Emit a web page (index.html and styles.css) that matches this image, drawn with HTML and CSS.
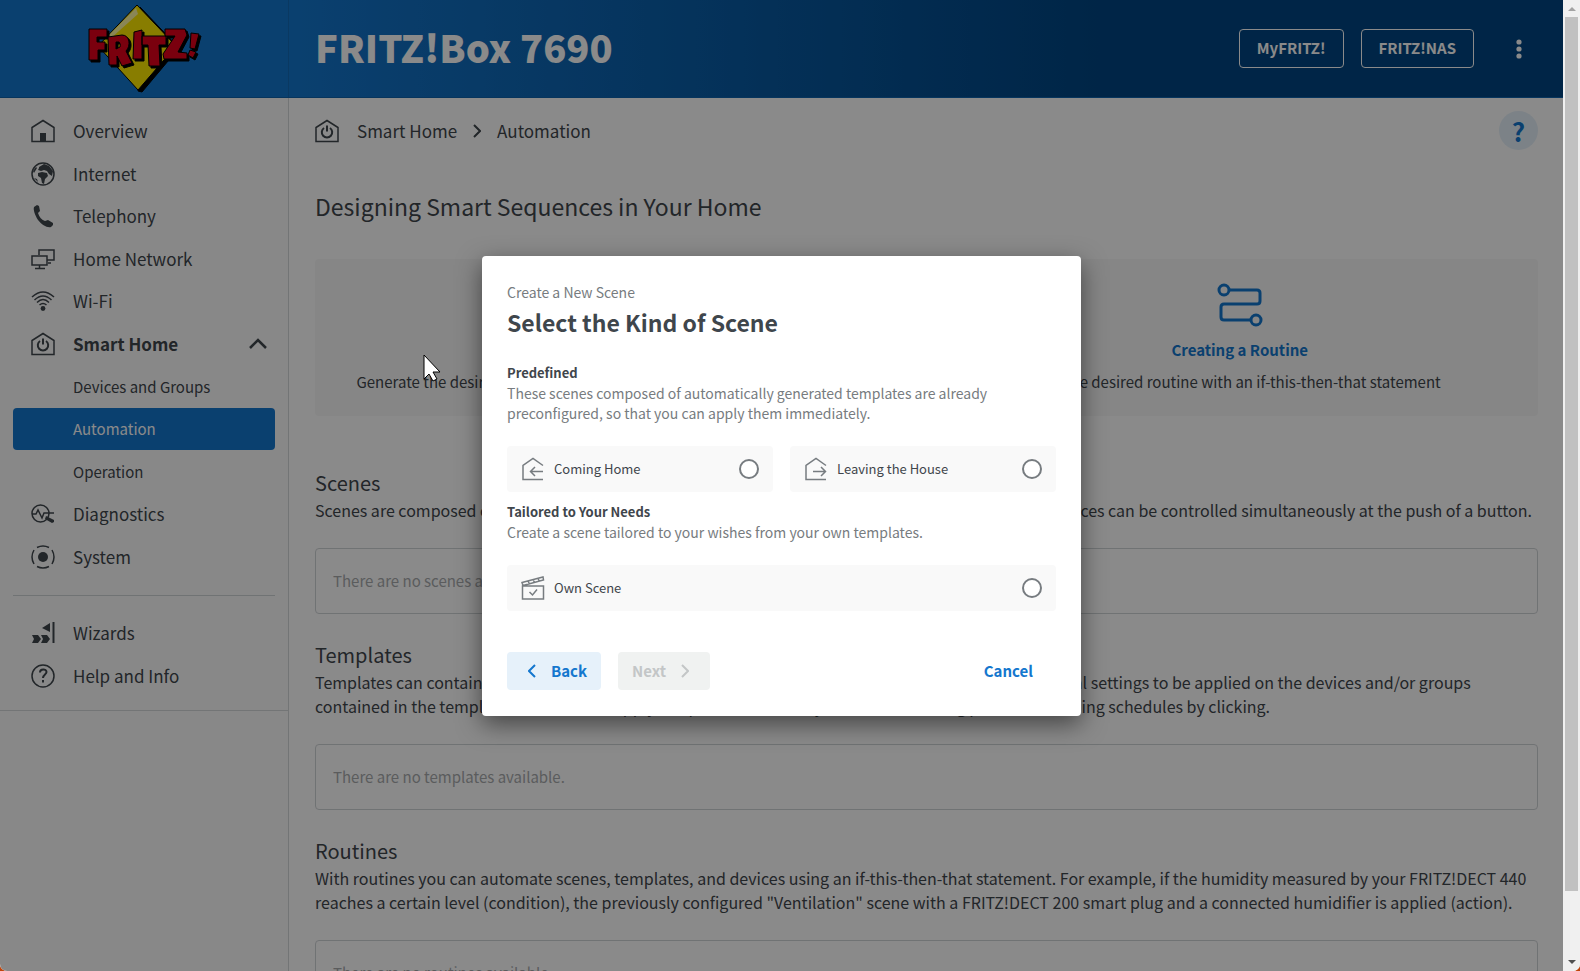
FILE: index.html
```html
<!DOCTYPE html>
<html lang="en">
<head>
    <meta charset="utf-8">
    <title>FRITZ!Box 7690</title>
    <link rel="stylesheet" href="styles.css">
</head>
<body>
    <svg width="0" height="0" class="defs" aria-hidden="true">
        <symbol id="icon-smarthome" viewBox="0 0 24 24">
            <path d="M1 22.500V8.500L12 1.500l11 7v14z"/>
            <path d="M12 6.500v6M9 9a5.200 5.200 0 1 0 6 0" stroke-width="2"/>
        </symbol>
        <symbol id="logo-letters" viewBox="0 0 114 90">
            <path fill-rule="evenodd" d="M1 25h18v8H9v5h8v8h-7v10H1zM20 33l14-2c8 0 9 11 4 16l6 12-10 3-5-10v9h-8zM28 38v7l4-2q1-3-1-5zM46 28l8-2v29h-9zM54 32h24v9h-7l1 21H61l-1-21h-6zM77 25h20l2 6-9 17 9 1v6H76l-1-5 12-18H77zM103 29l8 1-4 15-5-1zM102 46l6 2-3 6-5-3z"/>
        </symbol>
    </svg>

    <div class="window">
        <div class="page">
            <header class="header">
                <div class="logo">
                    <svg width="114" height="90" viewBox="0 0 114 90" role="img" aria-label="FRITZ!">
                        <path class="logo-shadow" d="M52 3l39 41-37 44-4-1z"/>
                        <path class="logo-diamond" d="M49 1l39 41-38 44L10 42z"/>
                        <path class="logo-shine" d="M48 4L20 32l2 3 28-25z"/>
                        <use class="logo-text-shadow" href="#logo-letters" x="2" y="2"/>
                        <use class="logo-text" href="#logo-letters"/>
                    </svg>
                </div>
                <div class="header-bar">
                    <div class="product">FRITZ!Box 7690</div>
                    <a class="header-button" href="#">MyFRITZ!</a>
                    <a class="header-button" href="#">FRITZ!NAS</a>
                    <button type="button" class="more" aria-label="More">
                        <svg width="6" height="20" viewBox="0 0 6 20"><circle cx="3" cy="3" r="2.600"/><circle cx="3" cy="10" r="2.600"/><circle cx="3" cy="17" r="2.600"/></svg>
                    </button>
                </div>
            </header>

            <div class="columns">
                <nav class="sidebar">
                    <ul class="menu">
                        <li><a href="#">
                            <svg class="icon" viewBox="0 0 24 24"><path d="M1 22.500V8.500L12 1.500l11 7v14z"/><path class="solid" d="M9 14h6v8.500H9z"/></svg>
                            Overview</a></li>
                        <li><a href="#">
                            <svg class="icon" viewBox="0 0 24 24"><circle cx="12" cy="12" r="11"/><path class="solid" d="M8 5l5-3 5 2 4 5-1 5-3-2-2-3-3-1-3 1-3-1 1-2zM7 11l4-1 5 1 1 3-3 3-1 5-2-1-1-5-3-2zM2 9l3-4 1 1-3 5zM3 16l3 1 1 3z"/></svg>
                            Internet</a></li>
                        <li><a href="#">
                            <svg class="icon" viewBox="0 0 24 24"><path class="solid" d="M3 3l3-2 2 1 1 5-2 2c1 4 4 7 7 8l3-1 5 3v2l-2 2c-4 1-9-2-13-7C4 11 2 6 3 3z"/></svg>
                            Telephony</a></li>
                        <li><a href="#">
                            <svg class="icon" viewBox="0 0 24 24"><path d="M8 8V3h15v10h-7M1 9h15v9H1zM8.500 18v3M4 21.500h10M17 16h3"/></svg>
                            Home Network</a></li>
                        <li><a href="#">
                            <svg class="icon" viewBox="0 0 24 24"><path d="M1 8q11-10 22 0M3.500 11q8.500-8 17 0M6 13.500q6-6 12 0M8.500 16q3.500-3 7 0"/><circle class="solid" cx="12" cy="19.500" r="2.400"/></svg>
                            Wi-Fi</a></li>
                        <li><a class="open" href="#">
                            <svg class="icon"><use href="#icon-smarthome"/></svg>
                            Smart Home
                            <svg class="arrow" width="18" height="12" viewBox="0 0 18 12"><path d="M1 10l8-8 8 8"/></svg></a></li>
                        <li><a class="sub" href="#">Devices and Groups</a></li>
                        <li><a class="sub active" href="#">Automation</a></li>
                        <li><a class="sub" href="#">Operation</a></li>
                        <li><a href="#">
                            <svg class="icon" viewBox="0 0 24 24"><circle cx="9.500" cy="11.500" r="8.500"/><path d="M1 12h4l2-4 4 8 2-5h10"/><path class="solid" d="M15 14l8 4v2l-2 1-7-4z"/></svg>
                            Diagnostics</a></li>
                        <li><a href="#">
                            <svg class="icon" viewBox="0 0 24 24"><circle class="solid" cx="12" cy="12" r="5"/><path d="M6 2.500q6-3 12 0M6 21.500q6 3 12 0M3 5q-4 7 0 14M21 5q4 7 0 14"/></svg>
                            System</a></li>
                    </ul>
                    <ul class="menu menu-extra">
                        <li><a href="#">
                            <svg class="icon" viewBox="0 0 24 24"><path class="solid" d="M1 14h6l3 4-3 4H1l2-4zM10 14h6l3 4-3 4h-6l2-4zM11 7l8-5v9z"/><path d="M22.500 1v21" stroke-width="2"/></svg>
                            Wizards</a></li>
                        <li><a href="#">
                            <svg class="icon" viewBox="0 0 24 24"><circle cx="12" cy="12" r="11"/><path d="M9 8.500c0-4 6.500-4 6.500-.500 0 2.500-3.500 2.500-3.500 6M12 16v2.500" stroke-width="2"/></svg>
                            Help and Info</a></li>
                    </ul>
                </nav>

                <main class="content">
                    <div class="breadcrumb">
                        <svg class="icon"><use href="#icon-smarthome"/></svg>
                        <a href="#">Smart Home</a>
                        <svg class="crumb-arrow" width="8" height="14" viewBox="0 0 8 14"><path d="M1 1l6 6-6 6"/></svg>
                        <a href="#">Automation</a>
                        <button type="button" class="help" aria-label="Help">?</button>
                    </div>

                    <h1>Designing Smart Sequences in Your Home</h1>

                    <div class="tiles">
                        <div class="tile">
                            <svg class="tile-icon" viewBox="0 0 46 46"><path d="M3 18h40v25H3zM3 15L42 4"/></svg>
                            <a href="#">Creating a Scene</a>
                            <p>Generate the desired scene for your home using your individual templates</p>
                        </div>
                        <div class="tile">
                            <svg class="tile-icon" viewBox="0 0 46 46"><circle cx="7" cy="8" r="5"/><path d="M12 8h28q3 0 3 3v8q0 3-3 3H7q-3 0-3 3v10q0 3 3 3h27"/><circle cx="39" cy="38" r="5"/></svg>
                            <a href="#">Creating a Routine</a>
                            <p>Set the desired routine with an if-this-then-that statement</p>
                        </div>
                    </div>

                    <section>
                        <h2>Scenes</h2>
                        <p>Scenes are composed of one or more individual templates. With such scenes, multiple smart home devices can be controlled simultaneously at the push of a button.</p>
                        <div class="empty">There are no scenes available.</div>
                    </section>
                    <section>
                        <h2>Templates</h2>
                        <p>Templates can contain the settings of various devices and groups. They allow several different individual settings to be applied on the devices and/or groups<br>contained in the template. You can then apply templates like holiday schedules, heating plans or switching schedules by clicking.</p>
                        <div class="empty">There are no templates available.</div>
                    </section>
                    <section>
                        <h2>Routines</h2>
                        <p>With routines you can automate scenes, templates, and devices using an if-this-then-that statement. For example, if the humidity measured by your FRITZ!DECT 440 reaches a certain level (condition), the previously configured "Ventilation" scene with a FRITZ!DECT 200 smart plug and a connected humidifier is applied (action).</p>
                        <div class="empty">There are no routines available.</div>
                    </section>
                </main>
            </div>

            <div class="overlay">
                <form class="dialog" role="dialog" aria-labelledby="dialog-title">
                    <p class="dialog-step">Create a New Scene</p>
                    <h2 id="dialog-title">Select the Kind of Scene</h2>

                    <h3>Predefined</h3>
                    <p>These scenes composed of automatically generated templates are already preconfigured, so that you can apply them immediately.</p>
                    <div class="options">
                        <label class="option" for="coming">
                            <svg class="icon" viewBox="0 0 24 24"><path d="M22 8.500L12 1.500l-10 7v14h20M22 14.500H10M14 10l-4.500 4.500L14 19"/></svg>
                            <span>Coming Home</span>
                            <input type="radio" id="coming" name="scene">
                        </label>
                        <label class="option" for="leaving">
                            <svg class="icon" viewBox="0 0 24 24"><path d="M22 8.500L12 1.500l-10 7v14h20M9 14.500h12M17 10l4.500 4.500L17 19"/></svg>
                            <span>Leaving the House</span>
                            <input type="radio" id="leaving" name="scene">
                        </label>
                    </div>

                    <h3>Tailored to Your Needs</h3>
                    <p>Create a scene tailored to your wishes from your own templates.</p>
                    <div class="options">
                        <label class="option wide" for="own">
                            <svg class="icon" viewBox="0 0 24 24"><path d="M1.500 10h21v13h-21zM1 6.500L22 1l.500 3L2 9.500zM7 5l1.500 3M12 3.500l1.500 3M17 2.500l1.500 3M8.500 16l3 3 4.500-5.500"/></svg>
                            <span>Own Scene</span>
                            <input type="radio" id="own" name="scene">
                        </label>
                    </div>

                    <div class="buttons">
                        <button type="button" class="back"><svg width="8" height="14" viewBox="0 0 8 14"><path d="M7 1L1 7l6 6"/></svg>Back</button>
                        <button type="submit" class="next" disabled>Next<svg width="8" height="14" viewBox="0 0 8 14"><path d="M1 1l6 6-6 6"/></svg></button>
                        <button type="button" class="cancel">Cancel</button>
                    </div>
                </form>
            </div>

            <svg class="pointer" width="20" height="28" viewBox="0 0 20 28" aria-hidden="true"><path d="M1 1v24l5-5 4 7 4-2-4-7h7z"/></svg>
        </div>

        <div class="scrollbar" aria-hidden="true">
            <svg width="17" height="17" viewBox="0 0 17 17"><path class="dim" d="M5 11l4-4 4 4z"/></svg>
            <div class="thumb"></div>
            <svg width="17" height="17" viewBox="0 0 17 17"><path d="M5 6l4 4 4-4z"/></svg>
        </div>
    </div>
</body>
</html>
```

FILE: styles.css
```css
* {
    box-sizing: border-box;
}

body {
    margin: 0;
    font-family: "Noto Sans CJK SC", "Noto Sans", sans-serif;
    font-size: 15px;
    line-height: 24px;
    color: #3f464c;
    background-color: #c0440c;
}

a {
    color: inherit;
    text-decoration: none;
}

button {
    font-family: inherit;
    cursor: pointer;
}

h1, h2, h3, p, ul {
    margin: 0;
    padding: 0;
    font-weight: normal;
}

svg {
    flex: none;
    fill: none;
    stroke: currentColor;
}

.defs {
    position: absolute;
}

.defs symbol,
.defs path {
    fill: inherit;
}

.window {
    display: flex;
    height: 100vh;
    overflow: hidden;
    background-color: #ffffff;
    border-radius: 0 0 7px 7px;
}

.page {
    position: relative;
    flex: 1;
    overflow: hidden;
}

/* Header */
.header {
    display: flex;
    height: 98px;
    color: #ffffff;
    background: linear-gradient(90deg, #1477ce 288px, #004583 1100px);
    border-bottom: 1px solid #0d62ad;
}

.logo {
    width: 289px;
    padding: 4px 0 0 88px;
    border-right: 1px solid #1369b5;
}

.logo svg {
    stroke: #000000;
}

.logo-shadow,
.logo-text-shadow {
    fill: #000000;
}

.logo-diamond {
    fill: #fbe800;
}

.logo-shine {
    fill: #fff7a0;
    stroke: none;
}

.logo-text {
    fill: #e2001a;
}

.header-bar {
    display: flex;
    flex: 1;
    align-items: center;
    padding: 0 33px 0 26px;
}

.product {
    flex: 1;
    padding-bottom: 3px;
    font-size: 38px;
    font-weight: 900;
    line-height: 48px;
}

.header-button {
    height: 39px;
    margin-right: 17px;
    padding: 0 17px;
    font-weight: bold;
    line-height: 36px;
    border: 1px solid #ffffff;
    border-radius: 4px;
}

.more {
    display: flex;
    justify-content: center;
    width: 22px;
    margin-left: 17px;
    padding: 0;
    color: #ffffff;
    background: none;
    border: none;
}

.more svg {
    fill: #ffffff;
    stroke: none;
}

.columns {
    display: flex;
    height: 100%;
}

/* Sidebar */
.sidebar {
    width: 289px;
    background-color: #fcfcfc;
    border-right: 1px solid #d5d8da;
}

.menu {
    display: grid;
    grid-auto-rows: 1fr;
    height: 468px;
    margin: 12px 13px 0;
    list-style: none;
    font-size: 17px;
}

.menu a {
    display: flex;
    align-items: center;
    gap: 18px;
    height: 100%;
    padding: 0 8px 0 18px;
}

.menu .sub {
    padding-left: 60px;
    font-size: 15px;
}

.menu .open {
    font-weight: bold;
}

.menu .active {
    color: #ffffff;
    background-color: #1477ce;
    border-radius: 4px;
}

.menu-extra {
    height: 115px;
    margin-top: 17px;
    padding: 16px 0 13px;
    border-top: 1px solid #d0d4d6;
}

.sidebar::after {
    content: "";
    display: block;
    border-top: 1px solid #d5d8da;
}

.icon {
    width: 24px;
    height: 24px;
    stroke-width: 1.5;
}

.icon .solid {
    fill: currentColor;
    stroke: none;
}

.arrow {
    margin-left: auto;
    stroke-width: 2.5;
}

/* Content */
.content {
    flex: 1;
    min-width: 0;
    padding: 13px 25px 0 26px;
}

.breadcrumb {
    display: flex;
    align-items: center;
    height: 39px;
    font-size: 17px;
}

.breadcrumb .icon {
    margin-right: 18px;
}

.crumb-arrow {
    margin: 0 16px;
    stroke-width: 2;
}

.help {
    width: 39px;
    height: 39px;
    margin-left: auto;
    padding: 0;
    font-size: 26px;
    font-weight: bold;
    line-height: 36px;
    color: #1477ce;
    background-color: #e6f1fa;
    border: none;
    border-radius: 50%;
}

h1 {
    margin: 40px 0 37px;
    font-size: 23px;
    line-height: 32px;
}

.tiles {
    display: grid;
    grid-template-columns: 1fr 1fr;
    gap: 30px;
    margin-bottom: 53px;
}

.tile {
    display: flex;
    flex-direction: column;
    align-items: center;
    height: 157px;
    padding: 23px 0;
    background-color: #f8f8f8;
    border-radius: 4px;
}

.tile a {
    margin: 10px 0 8px;
    font-weight: bold;
    color: #1477ce;
}

.tile-icon {
    width: 46px;
    height: 46px;
    color: #1477ce;
    stroke-width: 3;
}

section {
    margin-bottom: 27px;
}

section h2 {
    margin-bottom: 1px;
    font-size: 20px;
    line-height: 28px;
}

section p {
    font-size: 16px;
}

.empty {
    height: 66px;
    margin-top: 26px;
    padding: 0 17px;
    line-height: 63px;
    color: #a8abad;
    border: 1px solid #d0d4d6;
    border-radius: 4px;
}

/* Dialog */
.overlay {
    position: absolute;
    inset: 0;
    display: flex;
    align-items: center;
    justify-content: center;
    background-color: rgba(0, 0, 0, 0.46);
}

.dialog {
    width: 599px;
    padding: 25px 25px 26px;
    font-size: 14px;
    line-height: 20px;
    color: #777c80;
    background-color: #ffffff;
    border-radius: 4px;
    box-shadow: 0 8px 24px rgba(0, 0, 0, 0.5);
}

.dialog h2 {
    margin: 4px 0 25px;
    font-size: 23px;
    font-weight: bold;
    line-height: 32px;
    color: #3f464c;
}

.dialog h3 {
    font-size: 13px;
    font-weight: bold;
    line-height: 20px;
    color: #3f464c;
}

.dialog-step {
    margin-top: 1px;
}

.options {
    display: grid;
    grid-template-columns: 1fr 1fr;
    gap: 17px;
    margin: 23px 0 10px;
}

.option {
    display: flex;
    align-items: center;
    gap: 9px;
    height: 46px;
    padding: 0 14px;
    background-color: #f9f9f9;
    border-radius: 4px;
}

.option span {
    flex: 1;
    font-size: 13px;
    color: #3f464c;
}

.option input {
    width: 20px;
    height: 20px;
    margin: 0;
    appearance: none;
    background-color: #ffffff;
    border: 2px solid #777c80;
    border-radius: 50%;
}

.option.wide {
    grid-column: span 2;
}

.buttons {
    display: flex;
    gap: 17px;
    margin-top: 41px;
}

.buttons button {
    display: flex;
    align-items: center;
    gap: 15px;
    height: 38px;
    padding: 0 14px;
    font-size: 15px;
    font-weight: bold;
    color: #1477ce;
    background: none;
    border: none;
    border-radius: 4px;
}

.buttons svg {
    stroke-width: 2;
}

.buttons .back {
    padding-left: 21px;
    background-color: #e6f1fa;
}

.buttons .next {
    padding-right: 21px;
    color: #c3c6c7;
    background-color: #f0f2f1;
}

.buttons .cancel {
    margin-left: auto;
    padding: 0 23px;
}

.pointer {
    position: absolute;
    top: 354px;
    left: 423px;
    fill: #ffffff;
    stroke: #000000;
}

/* Scrollbar */
.scrollbar {
    display: flex;
    flex-direction: column;
    width: 17px;
    background-color: #f0f0f0;
}

.scrollbar svg {
    fill: #505050;
    stroke: none;
}

.scrollbar .dim {
    fill: #a3a3a3;
}

.thumb {
    height: 90vh;
    margin: 0 2px auto;
    background-color: #c1c1c1;
}
```
